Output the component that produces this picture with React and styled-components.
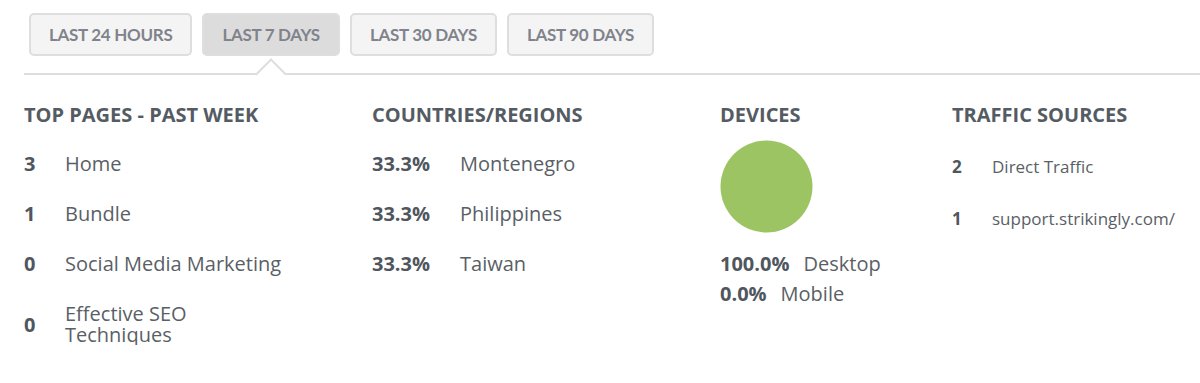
import React from "react";
import styled, { createGlobalStyle } from "styled-components";

const GlobalStyle = createGlobalStyle`
  body {
    margin: 0;
    background: #fff;
    font-family: "Open Sans", "Liberation Sans", sans-serif;
    color: #50565e;
  }
`;

const TabBar = styled.div`
  display: flex;
  gap: 10px;
  margin-left: 24px;
  padding: 13px 0 17px 5px;
  border-bottom: 2px solid #dddddd;
`;

const TabButton = styled.button`
  position: relative;
  height: 43px;
  padding: 0 18px;
  border: 2px solid #dedede;
  border-radius: 5px;
  background: ${({ active }) => (active ? "#dcdcdc" : "#f4f4f4")};
  color: #80838b;
  font-family: "Lato", "Liberation Sans", sans-serif;
  font-weight: 700;
  font-size: 17px;
  letter-spacing: -0.3px;
  text-transform: uppercase;
  cursor: pointer;

  &::after {
    content: "";
    display: ${({ active }) => (active ? "block" : "none")};
    position: absolute;
    left: 50%;
    top: calc(100% + 19px);
    width: 19px;
    height: 19px;
    background: #fff;
    border-top: 2px solid #dddddd;
    border-left: 2px solid #dddddd;
    transform: translate(-50%, -50%) rotate(45deg);
  }
`;

const Stats = styled.div`
  display: grid;
  grid-template-columns: 348px 348px 232px 1fr;
  padding: 28px 0 0 24px;
`;

const Column = styled.section`
  display: flex;
  flex-direction: column;
`;

const Heading = styled.h3`
  margin: 0 0 ${({ gap }) => gap}px;
  font-size: 20px;
  line-height: 24px;
  font-weight: 700;
  color: #555b63;
  text-transform: uppercase;
`;

const List = styled.ul`
  list-style: none;
  margin: 0;
  padding: 0;
  display: flex;
  flex-direction: column;
  gap: ${({ gap }) => gap}px;
`;

const Row = styled.li`
  display: flex;
  align-items: center;
  font-size: ${({ small }) => (small ? 17 : 20)}px;
  line-height: 21px;
`;

const Value = styled.span`
  flex: 0 0 ${({ w }) => w}px;
  font-weight: 700;
  color: #50565e;
`;

const Label = styled.span`
  max-width: 225px;
  color: #5a5f66;
`;

const Pie = styled.svg`
  display: block;
  margin: 13px 0 16px;
`;

const DeviceRow = styled.div`
  display: flex;
  gap: 14px;
  font-size: 20px;
  line-height: 30px;
  color: #5a5f66;

  b {
    font-weight: 700;
    color: #50565e;
  }
`;

const tabs = ["Last 24 Hours", "Last 7 Days", "Last 30 Days", "Last 90 Days"];

const pages = [
  ["3", "Home"],
  ["1", "Bundle"],
  ["0", "Social Media Marketing"],
  ["0", "Effective SEO Techniques"],
];

const countries = [
  ["33.3%", "Montenegro"],
  ["33.3%", "Philippines"],
  ["33.3%", "Taiwan"],
];

const sources = [
  ["2", "Direct Traffic"],
  ["1", "support.strikingly.com/"],
];

export default function App() {
  return (
    <>
      <GlobalStyle />
      <TabBar>
        {tabs.map((t, i) => (
          <TabButton key={t} active={i === 1}>
            {t}
          </TabButton>
        ))}
      </TabBar>
      <Stats>
        <Column>
          <Heading gap={26}>Top Pages - Past Week</Heading>
          <List gap={29}>
            {pages.map(([n, label], i) => (
              <Row key={i}>
                <Value w={41}>{n}</Value>
                <Label>{label}</Label>
              </Row>
            ))}
          </List>
        </Column>
        <Column>
          <Heading gap={26}>Countries/Regions</Heading>
          <List gap={29}>
            {countries.map(([n, label]) => (
              <Row key={label}>
                <Value w={88}>{n}</Value>
                <Label>{label}</Label>
              </Row>
            ))}
          </List>
        </Column>
        <Column>
          <Heading gap={0}>Devices</Heading>
          <Pie width="93" height="93" viewBox="0 0 93 93">
            <circle cx="46.5" cy="46.5" r="46" fill="#9cc463" />
          </Pie>
          <DeviceRow>
            <b>100.0%</b>
            <span>Desktop</span>
          </DeviceRow>
          <DeviceRow>
            <b>0.0%</b>
            <span>Mobile</span>
          </DeviceRow>
        </Column>
        <Column>
          <Heading gap={29}>Traffic Sources</Heading>
          <List gap={31}>
            {sources.map(([n, label]) => (
              <Row key={label} small>
                <Value w={40}>{n}</Value>
                <Label>{label}</Label>
              </Row>
            ))}
          </List>
        </Column>
      </Stats>
    </>
  );
}
